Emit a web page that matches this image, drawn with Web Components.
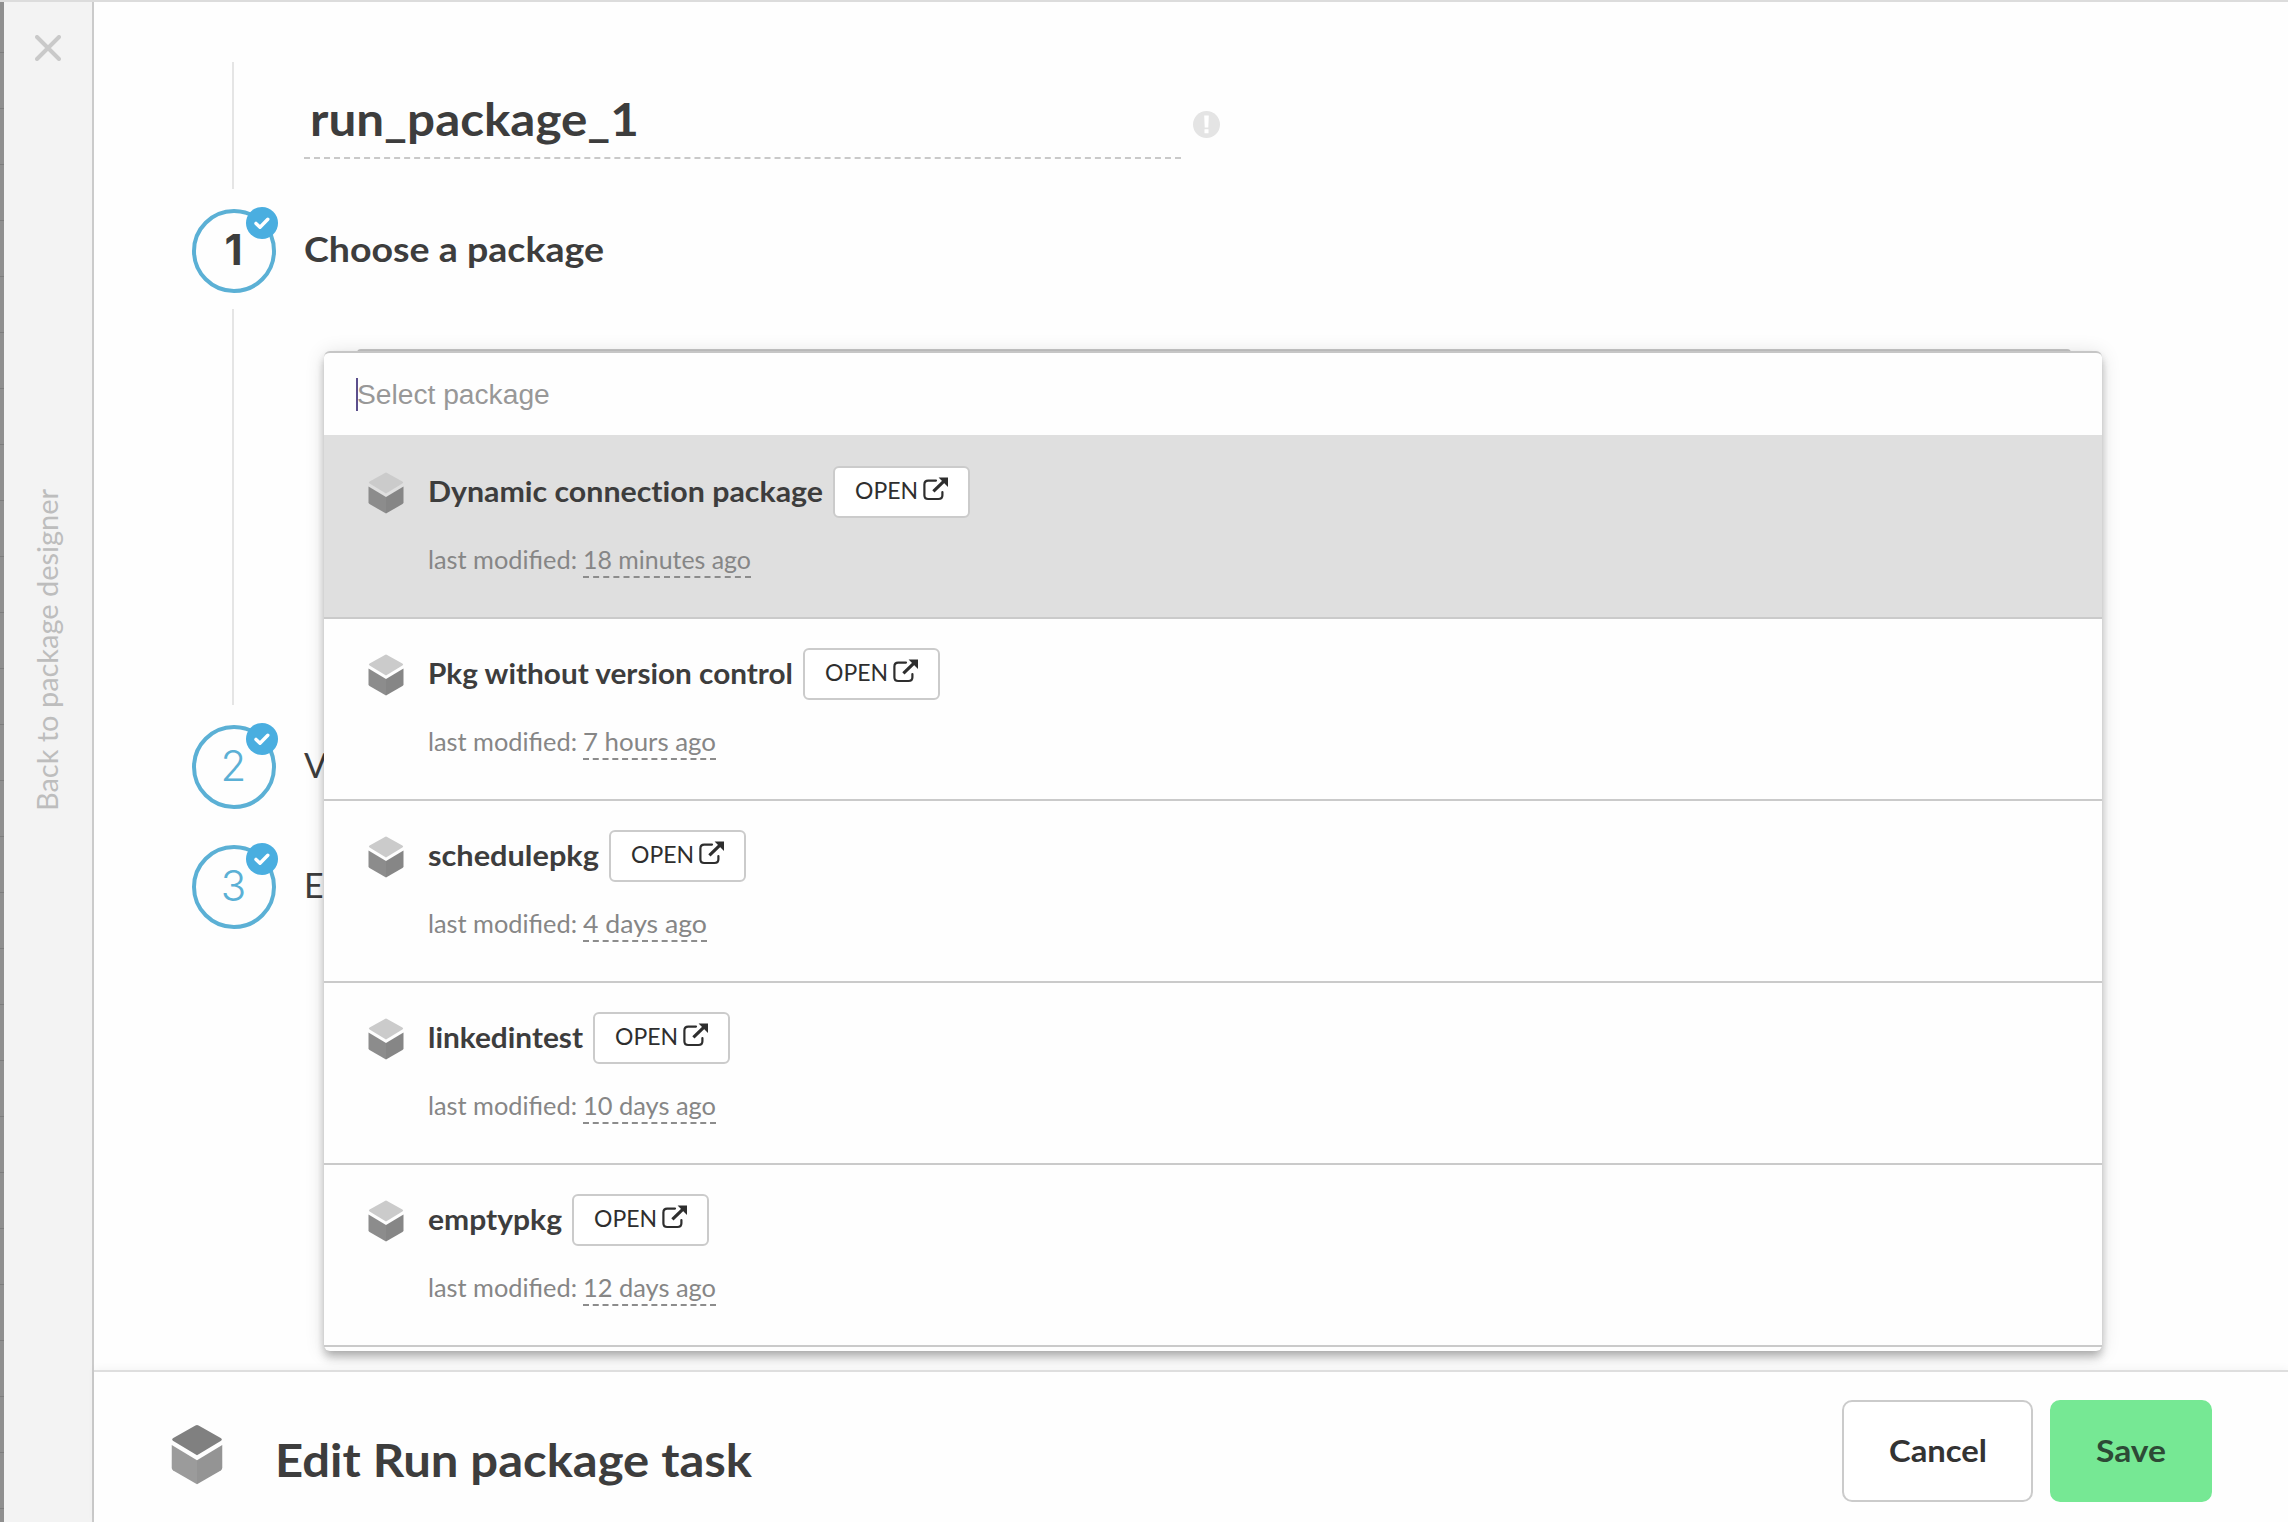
<!DOCTYPE html>
<html lang="en">
<head>
<meta charset="utf-8">
<title>Edit Run package task</title>
<style>
  html, body {
    margin: 0;
    height: 100%;
    overflow: hidden;
    background: #fefefe;
    font-family: Lato, "Open Sans", sans-serif;
    color: #3d3d3d;
  }
</style>
</head>
<body>
<task-editor>
  <back-bar slot="side">Back to package designer</back-bar>

  <task-name>run_package_1</task-name>

  <wizard-step number="1" active>
    <text-run slot="title" width="300">Choose a package</text-run>
    <package-select placeholder="Select package">
      <package-item selected name="Dynamic connection package" name-width="395" modified="18 minutes ago" modified-width="168"></package-item>
      <package-item name="Pkg without version control" name-width="365" modified="7 hours ago" modified-width="133"></package-item>
      <package-item name="schedulepkg" name-width="171" modified="4 days ago" modified-width="124"></package-item>
      <package-item name="linkedintest" name-width="155" modified="10 days ago" modified-width="133"></package-item>
      <package-item name="emptypkg" name-width="134" modified="12 days ago" modified-width="133"></package-item>
    </package-select>
  </wizard-step>
  <wizard-step number="2"><span slot="title">V</span></wizard-step>
  <wizard-step number="3"><span slot="title">E</span></wizard-step>

  <editor-footer slot="footer">
    <text-run slot="title" width="477">Edit Run package task</text-run>
    <action-button><text-run width="98">Cancel</text-run></action-button>
    <action-button primary><text-run width="70">Save</text-run></action-button>
  </editor-footer>
</task-editor>

<script>
// small helper: attach an open root with markup
function shadow(el, html) {
  const root = el.attachShadow({ mode: 'open' });
  root.innerHTML = html;
  return root;
}

// a single line of text stretched to a given width
class TextRun extends HTMLElement {
  constructor() {
    super();
    this.root = shadow(this, `
      <style>
        :host { display: inline-block; white-space: nowrap; text-align: left; }
        span { display: inline-block; transform-origin: 0 0; vertical-align: top; }
      </style>
      <span><slot></slot></span>
    `);
  }

  connectedCallback() {
    const w = Number(this.getAttribute('width'));
    if (!w) return;
    const span = this.root.querySelector('span');
    const rect = span.getBoundingClientRect();
    if (this.hasAttribute('vertical')) {
      span.style.transform = `scaleY(${w / rect.height})`;
      this.style.height = `${w}px`;
    } else {
      span.style.transform = `scaleX(${w / rect.width})`;
      this.style.width = `${w}px`;
    }
  }
}

class PackageIcon extends HTMLElement {
  constructor() {
    super();
    shadow(this, `
      <style>
        :host { display: block; width: 36px; height: 42px; }
        svg { display: block; width: 100%; height: 100%; }
        .top { fill: var(--top, #cbcbcb); }
        .left { fill: var(--left, #8c8c8c); }
        .right { fill: var(--right, #868686); }
      </style>
      <svg viewBox="0 0 36 42">
        <path class="top" d="M16.9 .9Q18 .2 19.1 .9L34.4 9.6Q36 10.6 34.4 11.6L18 21.6L1.6 11.6Q0 10.6 1.6 9.6Z"/>
        <path class="left" d="M.5 14.4L18 25V41.6L1.5 32Q.5 31.4 .5 30.2Z"/>
        <path class="right" d="M35.5 14.4L18 25V41.6L34.5 32Q35.5 31.4 35.5 30.2Z"/>
      </svg>
    `);
  }
}

class BackBar extends HTMLElement {
  constructor() {
    super();
    const text = this.textContent;
    shadow(this, `
      <style>
        :host {
          display: flex;
          flex-direction: column;
          align-items: center;
          box-sizing: border-box;
          height: 100%;
          padding: 33px 0 0;
          background: #f3f3f3;
          border-right: 2px solid #cbcbcb;
          color: #bdbdbd;
        }
        svg { display: block; width: 26px; height: 26px; }
        text-run {
          margin: 428px 2px 0 0;
          writing-mode: vertical-rl;
          transform: rotate(180deg);
          font-size: 28px;
          line-height: 40px;
        }
      </style>
      <svg viewBox="0 0 26 26"><path d="M2 2L24 24M24 2L2 24" stroke="#c9c9c9" stroke-width="4" stroke-linecap="round"/></svg>
      <text-run vertical width="322">${text}</text-run>
    `);
  }
}

class TaskName extends HTMLElement {
  constructor() {
    super();
    const text = this.textContent;
    shadow(this, `
      <style>
        :host { display: flex; align-items: flex-start; height: 207px; }
        .rail { width: 2px; height: 127px; margin: 60px 70px 0 40px; background: #e5e5e5; }
        .field {
          box-sizing: border-box;
          width: 877px;
          margin-top: 87px;
          padding: 0 0 8px 6px;
          border-bottom: 2px dashed #c9c9c9;
          font-size: 45px;
          font-weight: 700;
          line-height: 60px;
        }
        svg { display: block; width: 27px; height: 27px; margin: 109px 0 0 12px; }
        text-run { vertical-align: top; }
      </style>
      <div class="rail"></div>
      <div class="field"><text-run width="329">${text}</text-run></div>
      <svg viewBox="0 0 27 27">
        <circle cx="13.5" cy="13.5" r="13.5" fill="#e4e4e4"/>
        <path d="M11.2 4.4h4.6l-.5 12h-3.6zM11.5 18.2h4v4h-4z" fill="#fff"/>
      </svg>
    `);
  }
}

class WizardStep extends HTMLElement {
  constructor() {
    super();
    const number = this.getAttribute('number');
    shadow(this, `
      <style>
        :host { display: block; margin-bottom: 36px; }
        :host([active]) { margin-bottom: 0; }
        .head { display: flex; gap: 28px; height: 84px; }
        .circle {
          position: relative;
          box-sizing: border-box;
          width: 84px;
          height: 84px;
          padding-right: 1px;
          border: 4px solid #5bb0d5;
          border-radius: 50%;
          text-align: center;
          font: 300 42px/73px Inter, sans-serif;
          color: #5bb0d5;
        }
        .badge { position: absolute; top: -6px; right: -6px; width: 32px; height: 32px; }
        .title { font-size: 34px; line-height: 80px; }
        .body { display: none; }
        :host([active]) .circle { color: #3d3d3d; font-weight: 700; }
        :host([active]) .title { font-weight: 700; }
        :host([active]) .body { display: flex; height: 432px; }
        .rail { width: 2px; height: 396px; margin: 16px 124px 0 40px; background: #e5e5e5; }
        .content { padding-top: 56px; }
      </style>
      <div class="head">
        <div class="circle">${number}
          <svg class="badge" viewBox="0 0 32 32">
            <circle cx="16" cy="16" r="16" fill="#4aaee0"/>
            <path d="M10 16.4L14 20.2L21.8 12.2" fill="none" stroke="#fff" stroke-width="3.4" stroke-linecap="round" stroke-linejoin="round"/>
          </svg>
        </div>
        <div class="title"><slot name="title"></slot></div>
      </div>
      <div class="body">
        <div class="rail"></div>
        <div class="content"><slot></slot></div>
      </div>
    `);
  }
}

class PackageSelect extends HTMLElement {
  constructor() {
    super();
    shadow(this, `
      <style>
        :host {
          display: block;
          position: relative;
          box-sizing: border-box;
          width: 1714px;
          height: 70px;
          margin-left: -1px;
          border: 2px solid #c6c6c6;
          border-radius: 4px;
        }
        /* the open list covers the closed control */
        .panel {
          position: absolute;
          z-index: 2;
          top: 0;
          left: -35px;
          box-sizing: border-box;
          width: 1778px;
          height: 1000px;
          border-top: 2px solid #c6c6c6;
          border-radius: 6px;
          background: #fefefe;
          box-shadow: 0 4px 8px -2px rgba(0,0,0,.2), 0 8px 10px 0 rgba(0,0,0,.14), 0 2px 20px 0 rgba(0,0,0,.12);
        }
        .search {
          display: flex;
          align-items: center;
          height: 82px;
          padding-left: 32px;
          font: 28.2px/32px "Liberation Sans", Arial, sans-serif;
          color: #989898;
        }
        .caret { width: 2px; height: 33px; margin-right: -1px; background: #5c4f8c; }
      </style>
      <div class="panel">
        <div class="search"><i class="caret"></i><span>${this.getAttribute('placeholder')}</span></div>
        <slot></slot>
      </div>
    `);
  }
}

class PackageItem extends HTMLElement {
  constructor() {
    super();
    const attr = (n) => this.getAttribute(n);
    shadow(this, `
      <style>
        :host {
          display: flex;
          align-items: flex-start;
          box-sizing: border-box;
          height: 182px;
          padding: 29px 0 0 44px;
          border-bottom: 2px solid #cacaca;
        }
        :host([selected]) { height: 184px; padding-top: 31px; background: #dfdfdf; }
        package-icon { margin: 6px 24px 0 0; }
        .line { display: flex; align-items: flex-start; gap: 10px; }
        .name { font-size: 28.5px; font-weight: 700; line-height: 50px; font-variant-ligatures: none; }
        button {
          display: flex;
          gap: 5px;
          box-sizing: border-box;
          width: 137px;
          height: 52px;
          padding: 0 0 0 20px;
          border: 2px solid #cbcbcb;
          border-radius: 6px;
          background: #fff;
          font: 23.5px/45px Lato, sans-serif;
          color: #2e2e2e;
        }
        button svg { width: 26px; height: 24px; margin-top: 9px; }
        .meta { display: flex; gap: 6px; margin-top: 25px; font-size: 25px; line-height: 33px; color: #868686; }
        .ago { height: 30px; padding-bottom: 3px; border-bottom: 2px dashed #8c8c8c; }
      </style>
      <package-icon></package-icon>
      <div>
        <div class="line">
          <text-run class="name" width="${attr('name-width')}">${attr('name')}</text-run>
          <button type="button"><text-run width="63">OPEN</text-run>
            <svg viewBox="0 0 26 24">
              <path d="M13 3.6H5.2Q1.4 3.6 1.4 7.4V18.2Q1.4 22 5.2 22H15.4Q19.4 22 19.4 18.2V15" fill="none" stroke="#2e2e2e" stroke-width="2.2" stroke-linecap="round"/>
              <path d="M10.4 14.4L21 4.2" stroke="#2e2e2e" stroke-width="3.2"/>
              <path d="M15.6 .6H25V10Z" fill="#2e2e2e"/>
            </svg>
          </button>
        </div>
        <div class="meta">
          <text-run width="149">last modified:</text-run>
          <text-run class="ago" width="${attr('modified-width')}">${attr('modified')}</text-run>
        </div>
      </div>
    `);
  }
}

class ActionButton extends HTMLElement {
  constructor() {
    super();
    shadow(this, `
      <style>
        :host { display: block; }
        button {
          box-sizing: border-box;
          width: 191px;
          height: 102px;
          padding: 0 0 4px;
          border: 2px solid #cbcbcb;
          border-radius: 10px;
          background: #fff;
          font: 700 31px/96px Lato, sans-serif;
          color: #333;
        }
        :host([primary]) button { width: 162px; border-color: #76e894; background: #76e894; color: #2d4a36; }
      </style>
      <button type="button"><slot></slot></button>
    `);
  }
}

class EditorFooter extends HTMLElement {
  constructor() {
    super();
    shadow(this, `
      <style>
        :host {
          display: flex;
          align-items: flex-start;
          box-sizing: border-box;
          height: 152px;
          padding: 28px 76px 0 77px;
          border-top: 2px solid #dedede;
          background: #fefefe;
          box-shadow: 0 -2px 8px rgba(0,0,0,.04);
        }
        package-icon {
          --top: #808080;
          --left: #9b9b9b;
          --right: #949494;
          width: 52px;
          height: 61px;
          margin-top: 24px;
        }
        .title { flex: 1; margin: 30px 0 0 52px; font-size: 45px; font-weight: 700; line-height: 60px; }
        .actions { display: flex; gap: 17px; }
      </style>
      <package-icon></package-icon>
      <div class="title"><slot name="title"></slot></div>
      <div class="actions"><slot></slot></div>
    `);
  }
}

class TaskEditor extends HTMLElement {
  constructor() {
    super();
    shadow(this, `
      <style>
        :host {
          display: grid;
          grid-template-columns: 4px 90px 1fr;
          box-sizing: border-box;
          height: 100vh;
          border-top: 2px solid #dcdcdc;
        }
        /* sliver of the dimmed designer behind the drawer */
        .behind {
          background: repeating-linear-gradient(#8f8f8f 0 50px, #7d7d7d 50px 51px, #8f8f8f 51px 56px);
        }
        .main { display: flex; flex-direction: column; min-width: 0; min-height: 0; }
        .steps { flex: 1; min-height: 0; padding-left: 98px; }
        .foot { position: relative; z-index: 3; }
      </style>
      <div class="behind"></div>
      <slot name="side"></slot>
      <div class="main">
        <div class="steps"><slot></slot></div>
        <div class="foot"><slot name="footer"></slot></div>
      </div>
    `);
  }
}

customElements.define('task-editor', TaskEditor);
customElements.define('back-bar', BackBar);
customElements.define('task-name', TaskName);
customElements.define('wizard-step', WizardStep);
customElements.define('package-select', PackageSelect);
customElements.define('package-item', PackageItem);
customElements.define('package-icon', PackageIcon);
customElements.define('action-button', ActionButton);
customElements.define('editor-footer', EditorFooter);
customElements.define('text-run', TextRun); // last, it measures inside the others
</script>
</body>
</html>
